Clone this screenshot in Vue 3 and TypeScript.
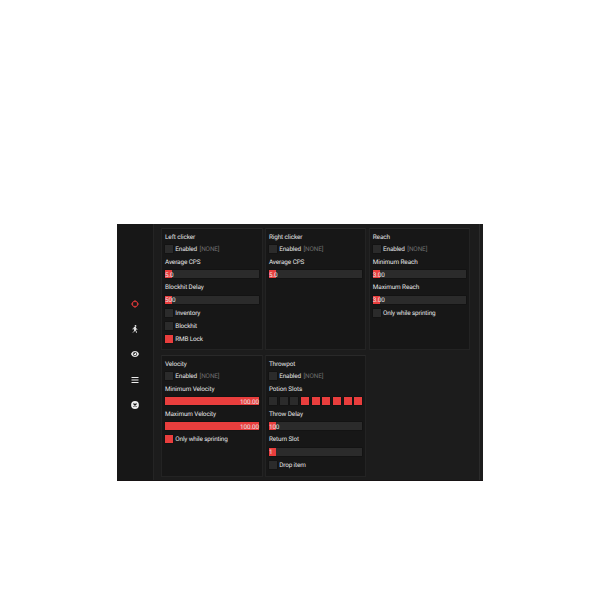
<script setup lang="ts">
interface Row {
  kind: 'check' | 'label' | 'bar' | 'slots'
  text?: string
  on?: boolean
  bind?: boolean
  fill?: number
  right?: boolean
}
interface Panel {
  title: string
  rows: Row[]
}

const check = (text: string, on = false, bind = false): Row => ({ kind: 'check', text, on, bind })
const slider = (name: string, text: string, fill = 7, right = false): Row[] => [
  { kind: 'label', text: name },
  { kind: 'bar', text, fill, right },
]
const enabled = check('Enabled', false, true)
const slots: boolean[] = [false, false, false, true, true, true, true, true, true]

const panels: Panel[] = [
  {
    title: 'Left clicker',
    rows: [enabled, ...slider('Average CPS', '5.0'), ...slider('Blockhit Delay', '500'),
      check('Inventory'), check('Blockhit'), check('RMB Lock', true)],
  },
  { title: 'Right clicker', rows: [enabled, ...slider('Average CPS', '5.0')] },
  {
    title: 'Reach',
    rows: [enabled, ...slider('Minimum Reach', '3.00'), ...slider('Maximum Reach', '3.00'),
      check('Only while sprinting')],
  },
  {
    title: 'Velocity',
    rows: [enabled, ...slider('Minimum Velocity', '100.00', 94, true),
      ...slider('Maximum Velocity', '100.00', 94, true), check('Only while sprinting', true)],
  },
  {
    title: 'Throwpot',
    rows: [enabled, { kind: 'label', text: 'Potion Slots' }, { kind: 'slots' },
      ...slider('Throw Delay', '100'), ...slider('Return Slot', '1'), check('Drop item')],
  },
]
</script>

<template>
  <main class="page">
    <div class="window">
      <nav class="sidebar">
        <svg class="icon active" viewBox="0 0 16 16">
          <circle cx="8" cy="8" r="5.600" fill="none" stroke="currentColor" stroke-width="2" />
          <path d="M8 0v4.500M8 11.500v4.500M0 8h4.500M11.500 8h4.500" stroke="currentColor" stroke-width="1.800" />
        </svg>
        <svg class="icon" viewBox="0 0 16 16">
          <circle cx="9" cy="1.800" r="1.800" fill="currentColor" />
          <path d="M8 4.800L7.500 9.500L10 11.500L11 15.500M7.400 9.500L6.600 12.400L4 15M7.600 5L4.600 6.400L4 9M8.600 5L10 7.800L12.600 8.800" fill="none" stroke="currentColor" stroke-width="1.800" />
          <path d="M6.500 4.200h3l.5 5.800h-3.600z" fill="currentColor" />
        </svg>
        <svg class="icon" viewBox="0 0 16 16">
          <path d="M0 8Q2.500 2 8 2T16 8Q13.500 14 8 14T0 8z" fill="currentColor" />
          <circle cx="8" cy="8" r="3.500" fill="none" stroke="#171717" stroke-width="1.500" />
          <circle cx="7" cy="7" r="1" fill="#171717" />
        </svg>
        <svg class="icon" viewBox="0 0 16 16">
          <path d="M1 3h14M1 8h14M1 13h14" stroke="currentColor" stroke-width="2.300" />
        </svg>
        <svg class="icon" viewBox="0 0 16 16">
          <circle cx="8" cy="8" r="7.800" fill="currentColor" />
          <path d="M5 5l6 6M11 5l-6 6" stroke="#171717" stroke-width="2.400" />
        </svg>
      </nav>
      <div class="content">
        <section v-for="p in panels" :key="p.title" class="panel">
          <div class="title">{{ p.title }}</div>
          <div v-for="(r, i) in p.rows" :key="i" class="row" :class="r.kind">
            <template v-if="r.kind === 'check'">
              <span class="box" :class="{ on: r.on }"></span>
              <span class="name">{{ r.text }}</span>
              <span v-if="r.bind" class="bind">[NONE]</span>
            </template>
            <template v-else-if="r.kind === 'label'">{{ r.text }}</template>
            <div v-else-if="r.kind === 'bar'" class="track">
              <span class="fill" :style="{ width: r.fill + 'px' }"></span>
              <span class="value" :class="{ right: r.right }">{{ r.text }}</span>
            </div>
            <template v-else>
              <span v-for="(s, n) in slots" :key="n" class="box" :class="{ on: s }"></span>
            </template>
          </div>
        </section>
      </div>
    </div>
  </main>
</template>

<style>
body {
  background: #fff;
}
</style>

<style scoped>
.page {
  height: 600px;
  box-sizing: border-box;
  padding: 224px 117px 119px;
}
.window {
  display: flex;
  height: 257px;
  box-sizing: border-box;
  background: #1c1c1c;
  border-bottom: 1px solid #171314;
  color: #e6e6e6;
  font: 6.400px/8px Roboto, sans-serif;
  letter-spacing: -0.100px;
  text-rendering: geometricPrecision;
  white-space: nowrap;
}
.sidebar {
  width: 37px;
  box-sizing: border-box;
  flex: none;
  display: flex;
  flex-direction: column;
  align-items: center;
  gap: 17.300px;
  padding-top: 75.700px;
  background: #171717;
  border-right: 1px solid #242424;
}
.icon {
  width: 8px;
  height: 8px;
  color: #eee;
}
.active {
  color: #d93838;
}
.content {
  flex: 1;
  display: grid;
  grid-template-columns: repeat(3, 101.500px);
  grid-template-rows: 122px 122px;
  column-gap: 2.400px;
  row-gap: 4.700px;
  padding: 4px 0 0 7px;
  border-right: 1px solid #2b2b2b;
  margin-right: 3px;
}
.panel {
  box-sizing: border-box;
  background: #171717;
  border: 1px solid #232323;
  border-top-color: #292929;
  padding: 2px 3px 0;
}
.title {
  height: 11.600px;
  line-height: 12px;
}
.row {
  height: 13px;
  display: flex;
  align-items: center;
}
.label {
  height: 12.450px;
}
.bar,
.slots {
  height: 12.900px;
}
.box {
  width: 8px;
  height: 8px;
  flex: none;
  background: #2b2b2b;
  box-shadow: 0 0 0 0.500px #111;
}
.on {
  background: #e93e3d;
}
.name {
  margin-left: 2.300px;
  letter-spacing: -0.150px;
}
.bind {
  margin-left: 2.500px;
  color: #707070;
}
.track {
  position: relative;
  width: 94px;
  height: 8px;
  background: #2b2b2b;
  box-shadow: 0 0 0 0.500px #111;
}
.fill {
  display: block;
  height: 8px;
  background: #e93e3d;
}
.value {
  position: absolute;
  left: 0;
  top: 0.500px;
}
.value.right {
  left: auto;
  right: 0;
}
.slots {
  width: 93.400px;
  justify-content: space-between;
}
</style>
